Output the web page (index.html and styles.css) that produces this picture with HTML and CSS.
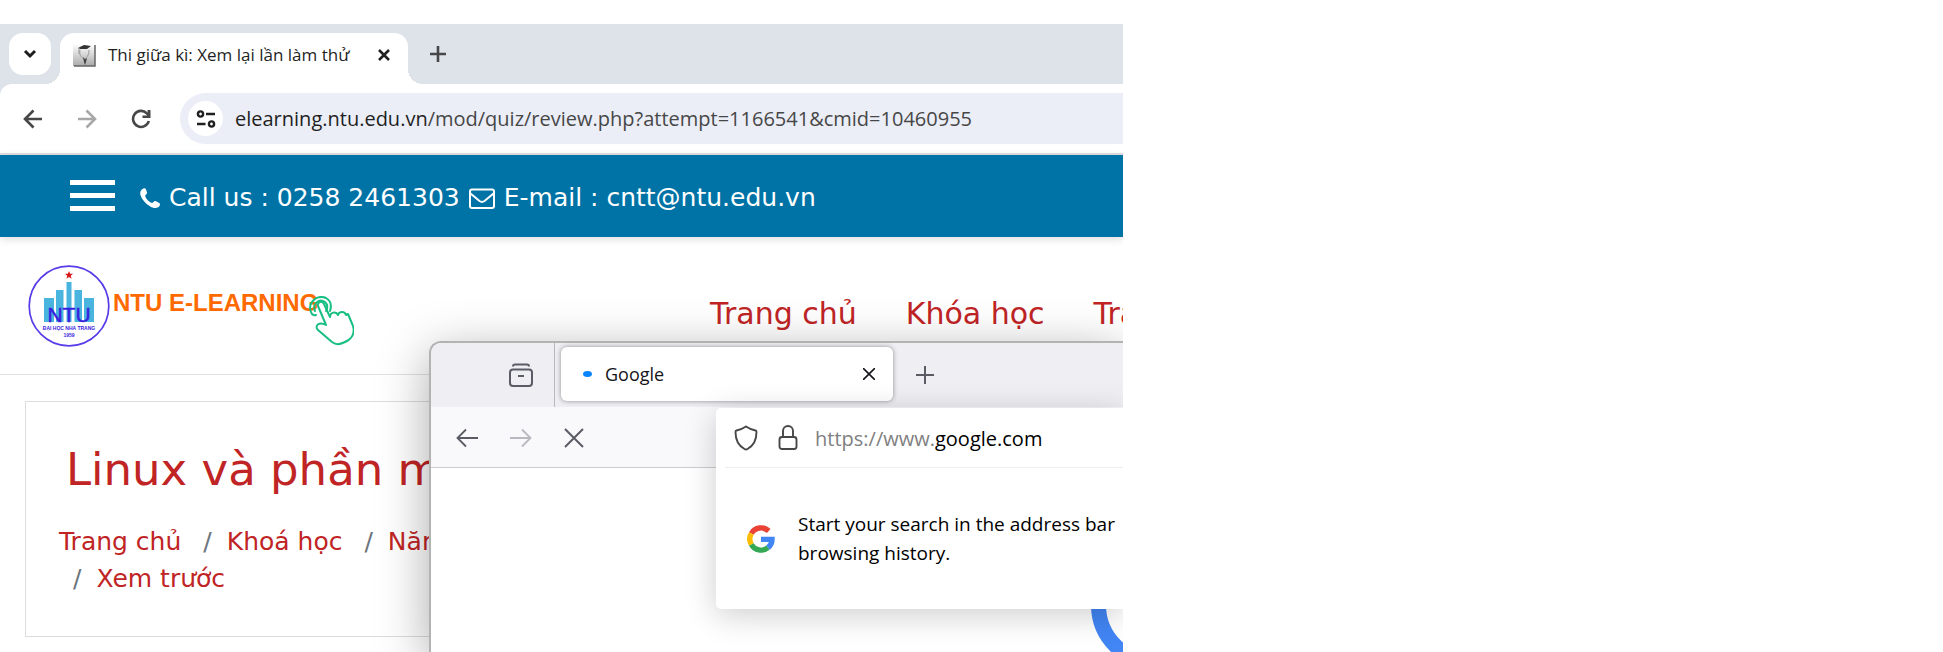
FILE: index.html
```html
<!DOCTYPE html>
<html lang="vi">
<head>
<meta charset="utf-8">
<title>Thi giữa kì: Xem lại lần làm thử</title>
<link rel="stylesheet" href="styles.css">
</head>
<body>
<div class="desktop">
  <div class="chrome">
    <div class="chrome-tabs">
      <button class="tab-search" aria-label="Search tabs"><svg width="14" height="10" viewBox="0 0 14 10"><path d="M2 2l5 5 5-5" fill="none" stroke="#1f1f1f" stroke-width="3"/></svg></button>
      <div class="chrome-tab">
        <svg class="favicon" width="24" height="24" viewBox="0 0 24 24"><defs><linearGradient id="fg" x2="0" y2="1"><stop offset="0" stop-color="#fff"/><stop offset="1" stop-color="#aaa"/></linearGradient></defs><path d="M1 1h22v22H1z" fill="url(#fg)"/><path d="M23 2v21H2" fill="none" stroke="#666" stroke-width="1.500"/><path d="M6 5l6-3 7 1-4 3-7 0z" fill="#333"/><path d="M7 5v6M8 7c-1 5 1 7 4 9M17 7c0 4-1 6-3 8" fill="none" stroke="#999"/><path d="M11 14l2 2 2-1-1 4-1 3-1-3z" fill="#444"/></svg>
        <span class="chrome-tab-title">Thi giữa kì: Xem lại lần làm thử</span>
        <button class="plain" aria-label="Close tab"><svg width="14" height="14" viewBox="0 0 14 14"><path d="M2 2l10 10M12 2L2 12" stroke="#1f1f1f" stroke-width="2.600"/></svg></button>
      </div>
      <button class="plain chrome-new" aria-label="New tab"><svg width="16" height="16" viewBox="0 0 16 16"><path d="M8 0v16M0 8h16" stroke="#474747" stroke-width="2.600"/></svg></button>
    </div>
    <div class="chrome-bar-wrap"><div class="chrome-bar">
      <button class="plain" aria-label="Back"><svg width="20" height="20" viewBox="0 0 20 20"><path d="M19 10H3M10.500 1.500L2 10l8.500 8.500" fill="none" stroke="#474747" stroke-width="2.600"/></svg></button>
      <button class="plain" aria-label="Forward"><svg width="20" height="20" viewBox="0 0 20 20"><path d="M1 10h16M9.500 1.500L18 10l-8.500 8.500" fill="none" stroke="#a8a8a8" stroke-width="2.600"/></svg></button>
      <button class="plain" aria-label="Reload"><svg width="20" height="20" viewBox="0 0 20 20"><path d="M17.800 12a8 8 0 1 1-2-7.700L18 6.500" fill="none" stroke="#474747" stroke-width="2.600"/><path d="M19.500 1v8h-8V6.500h5V1z" fill="#474747"/></svg></button>
      <div class="omnibox">
        <button class="site-info" aria-label="Site information"><svg width="20" height="18" viewBox="0 0 20 18" fill="none" stroke="#1f1f1f" stroke-width="2.400"><circle cx="4.500" cy="4" r="2.600"/><path d="M10 4h9M1 14h8.500"/><circle cx="15.500" cy="14" r="2.600"/></svg></button>
        <div class="url"><span>elearning.ntu.edu.vn</span>/mod/quiz/review.php?attempt=1166541&amp;cmid=10460955</div>
      </div>
    </div></div>
    <div class="topbar">
      <button class="plain burger" aria-label="Menu"><i></i><i></i><i></i></button>
      <svg width="20" height="20" viewBox="0 0 20 20"><path d="M3.500.5c1.500-.8 2.300 0 2.800 1.800l.8 2.500c.3 1.200-2 2-1.900 3 .3 2.700 4 6.600 6.800 7.200 1.300.2 1.800-2 3-1.900.9.200 4 1.700 4.800 2.300.5 1-.3 3-1.200 3.600-2.700 1.500-5.600 1-8.300-.6C5.500 15.600 2.200 11.900.6 7.500-.4 4.500.6 1.700 3.500.5z" fill="#fff"/></svg>
      <span>Call us : 0258 2461303</span>
      <svg width="26" height="21" viewBox="0 0 26 21" fill="none" stroke="#fff" stroke-width="2"><rect x="1" y="1.500" width="24" height="18.500" rx="2"/><path d="M1.500 5.500l9 7.500q2.500 1.800 5 0l9-7.500"/></svg>
      <span>E-mail : cntt@ntu.edu.vn</span>
    </div>
    <header class="site-head">
      <div class="brand">
        <svg class="seal" width="82" height="82" viewBox="0 0 82 82"><circle cx="41" cy="41" r="39.800" fill="#fff" stroke="#5a3be8" stroke-width="1.700"/><path d="M41 6l1.100 2.800h3l-2.400 1.900.9 3L41 12l-2.600 1.700.9-3-2.400-1.900h3z" fill="#d81818"/><path d="M16 33h10v24H16zM28 25h7.500v32H28zM38.500 17h5v40h-5zM46.500 25H54v32h-7.500zM56 33h10v24H56z" fill="#49b4de"/><text x="41" y="57" class="seal-ntu">NTU</text><text x="41" y="65" class="seal-small">ĐẠI HỌC NHA TRANG</text><text x="41" y="72" class="seal-year">1959</text></svg>
        <span class="brand-name">NTU E-LEARNING</span>
        <svg class="hand" width="46" height="50" viewBox="0 0 46 50" fill="none" stroke="#18bf83" stroke-width="2" stroke-linecap="round" stroke-linejoin="round"><path d="M18 29L10 10c-1-4 4-6 6-2l6 13c0-5 6-6 8-2 1-4 7-4 8 0l2-1 5 12c2 7-1 13-8 16-6 3-9 3-13 0L10 34c-4-4 1-9 8-5z"/><path d="M7 15C4 8 11 2 17 6q4 4 1 9"/><path d="M4 18C-2 8 8-2 18 2q7 4 4 13M4 18q2 2 4 1"/></svg>
      </div>
      <nav class="site-nav"><a href="#">Trang chủ</a><a href="#">Khóa học</a><a href="#">Trang</a></nav>
    </header>
    <main class="course">
      <h1>Linux và phần mềm</h1>
      <ol class="crumbs"><li><a href="#">Trang chủ</a></li><li><a href="#">Khoá học</a></li><li><a href="#">Năm</a></li></ol>
      <ol class="crumbs crumbs-last"><li><a href="#">Xem trước</a></li></ol>
    </main>
  </div>

  <section class="firefox" aria-label="Google">
    <div class="fx-tabs">
      <div class="fx-view"><button class="plain" aria-label="Recent browsing"><svg width="24" height="24" viewBox="0 0 24 24" fill="none" stroke="#5b5b66" stroke-width="2"><path d="M4 3.500C4 2 5 1.500 6 1.500h12c1 0 2 .5 2 2" /><rect x="1" y="6.500" width="22" height="16.500" rx="3"/><path d="M9 13h6"/></svg></button></div>
      <div class="fx-tab"><i class="fx-dot"></i><span>Google</span><button class="plain" aria-label="Close tab"><svg width="12" height="12" viewBox="0 0 12 12"><path d="M0 0l12 12M12 0L0 12" stroke="#15141a" stroke-width="1.600"/></svg></button></div>
      <button class="plain fx-new" aria-label="New tab"><svg width="18" height="18" viewBox="0 0 18 18"><path d="M9 0v18M0 9h18" stroke="#5b5b66" stroke-width="2"/></svg></button>
    </div>
    <div class="fx-bar">
      <button class="plain" aria-label="Back"><svg width="22" height="20" viewBox="0 0 22 20"><path d="M22 10H2M10 1.500L1.500 10l8.500 8.500" fill="none" stroke="#5b5b66" stroke-width="1.800"/></svg></button>
      <button class="plain" aria-label="Forward"><svg width="22" height="20" viewBox="0 0 22 20"><path d="M0 10h20M12 1.500l8.500 8.500-8.500 8.500" fill="none" stroke="#b9b9bf" stroke-width="1.800"/></svg></button>
      <button class="plain" aria-label="Stop"><svg width="20" height="20" viewBox="0 0 20 20"><path d="M1 1l18 18M19 1L1 19" stroke="#5b5b66" stroke-width="2"/></svg></button>
    </div>
    <div class="fx-page"><svg class="big-g" width="130" height="130" viewBox="0 0 130 130"><circle cx="65" cy="65" r="57.500" fill="none" stroke="#4285f4" stroke-width="15"/></svg></div>
    <div class="fx-panel">
      <div class="fx-url">
        <svg width="24" height="26" viewBox="0 0 24 26"><path d="M12 1.500c3 2 6.500 3.500 9.500 4 .8.200 1 .7 1 1.500 0 8-3.500 14-9 17-1 .6-2 .6-3 0-5.500-3-9-9-9-17 0-.8.200-1.300 1-1.500 3-.5 6.500-2 9.500-4z" fill="none" stroke="#474747" stroke-width="1.900"/></svg>
        <svg width="20" height="26" viewBox="0 0 20 26" fill="none" stroke="#474747" stroke-width="1.900"><rect x="1.500" y="12" width="17" height="12" rx="2.500"/><path d="M5 12V6a5 5 0 0 1 10 0v6"/></svg>
        <span class="fx-address">https://www.<b>google.com</b></span>
      </div>
      <div class="fx-tip">
        <svg width="28" height="28" viewBox="0 0 28 28" fill="none" stroke-width="5.400"><path d="M21.700 6A11.200 11.200 0 0 0 4.300 8.500" stroke="#ea4335"/><path d="M4.300 8.500a11.200 11.200 0 0 0 0 11" stroke="#fbbc05"/><path d="M4.300 19.500a11.200 11.200 0 0 0 16.700 3.200" stroke="#34a853"/><path d="M21 22.700a11 11 0 0 0 4-8.300H14" stroke="#4285f4"/></svg>
        <p>Start your search in the address bar<br>browsing history.</p>
      </div>
    </div>
  </section>
</div>
</body>
</html>
```
FILE: styles.css
```css
* { box-sizing: border-box; }
body { margin: 0; background: #fff; font-family: "Open Sans", "Noto Sans", sans-serif; }
h1, p, ol { margin: 0; padding: 0; }
svg { display: block; flex: none; }
.plain { border: 0; padding: 0; background: none; display: block; flex: none; }
.desktop { position: relative; margin-top: 24px; width: 57.8vw; height: calc(100vh - 24px); overflow: hidden; white-space: nowrap; }

.chrome-tabs { display: flex; align-items: center; height: 60px; padding-left: 9px; background: #dee3ea; }
.tab-search { width: 42px; height: 42px; border: 0; border-radius: 14px; background: #fff; padding: 0; display: grid; place-items: center; flex: none; }
.chrome-tab { position: relative; align-self: flex-end; display: flex; align-items: center; width: 348px; height: 51px; margin-left: 9px; padding: 0 17px 8px 12px; border-radius: 14px 14px 0 0; background: #fff; }
.chrome-tab::before, .chrome-tab::after { content: ""; position: absolute; bottom: 0; width: 15px; height: 15px; }
.chrome-tab::before { right: 100%; background: radial-gradient(circle at 0 0, transparent 15px, #fff 15px); }
.chrome-tab::after { left: 100%; background: radial-gradient(circle at 100% 0, transparent 15px, #fff 15px); }
.chrome-tab-title { flex: 1; margin-left: 12px; font-size: 17px; line-height: 24px; color: #1f1f1f; }
.chrome-new { margin-left: 22px; }
.chrome-bar-wrap { background: #dee3ea; }
.chrome-bar { display: flex; align-items: center; gap: 34px; height: 71px; padding-left: 23px; border-bottom: 2px solid #e0e0e0; border-radius: 12px 0 0 0; background: #fff; }
.omnibox { flex: 1; display: flex; align-items: center; height: 51px; margin-left: -5px; padding-left: 8px; border-radius: 26px 0 0 26px; background: #ebeef7; }
.site-info { width: 35px; height: 35px; border: 0; border-radius: 50%; padding: 0; background: #fff; display: grid; place-items: center; flex: none; }
.url { margin-left: 12px; font-size: 20px; line-height: 28px; color: #474747; }
.url span { color: #1f1f1f; }

.topbar { position: relative; display: flex; align-items: center; height: 82px; padding: 4px 0 0 70px; background: #0073a6; box-shadow: 0 2px 8px rgba(0,0,0,.14); color: #fff; font: 25px/36px Verdana, "DejaVu Sans", sans-serif; gap: 9px; }
.burger { display: grid; gap: 8px; width: 45px; margin-right: 16px; margin-bottom: 6px; }
.burger i { height: 5px; background: #fff; }
.site-head { display: flex; height: 138px; padding-left: 28px; border-bottom: 1px solid #e4e0e2; }
.brand { display: flex; width: 682px; padding-top: 28px; flex: none; }
.brand-name { margin: 20px 0 0 3px; font: bold 24px/36px "Liberation Sans", sans-serif; color: #ff6a00; }
.hand { margin: 31px 0 0 -10px; }
.seal text { font-family: "Liberation Sans", sans-serif; text-anchor: middle; fill: #3a1ee0; }
.seal .seal-ntu { font-size: 21px; stroke: #3a1ee0; stroke-width: .5px; }
.seal .seal-small { font-size: 5px; font-weight: bold; }
.seal .seal-year { font-size: 5px; font-weight: bold; }
.site-nav { display: flex; gap: 49px; padding-top: 56px; font: 30px/42px Verdana, "DejaVu Sans", sans-serif; }
a { color: #c02425; text-decoration: none; }
.course { height: 236px; margin: 26px 25px 0; padding: 38px 33px; border: 1px solid #dcdcdc; overflow: hidden; font-family: Verdana, "DejaVu Sans", sans-serif; }
.course h1 { padding-left: 7px; font-size: 45px; line-height: 60px; font-weight: 400; color: #c02425; }
.crumbs { display: flex; list-style: none; margin-top: 23px; font-size: 25px; line-height: 37px; }
.crumbs-last { margin-top: 0; }
.crumbs li + li::before, .crumbs-last li::before { content: "/"; padding: 0 15px 0 22px; color: #6c757d; }
.crumbs-last li::before { padding-left: 14px; }

.firefox { position: absolute; left: 429px; right: 0; top: 317px; bottom: 0; border: 2px solid #b3b3b3; border-width: 2px 0 0 2px; border-radius: 12px 0 0 0; background: #fff; box-shadow: 0 12px 50px rgba(0,0,0,.34); }
.fx-tabs { display: flex; align-items: center; height: 64px; background: #efeef3; border-radius: 10px 0 0 0; }
.fx-view { display: flex; align-items: center; justify-content: flex-end; width: 124px; height: 64px; padding-right: 21px; border-right: 1px solid #b8b8be; }
.fx-tab { display: flex; align-items: center; width: 332px; height: 54px; margin: 0 0 2px 6px; padding: 0 18px 0 22px; border-radius: 6px; background: #fff; box-shadow: 0 0 5px rgba(0,0,0,.4); font-size: 18px; color: #15141a; }
.fx-tab span { flex: 1; margin-left: 13px; }
.fx-dot { width: 9px; height: 6px; border-radius: 50%; background: #0a84ff; }
.fx-new { margin-left: 23px; }
.fx-bar { display: flex; align-items: center; gap: 32px; height: 61px; padding: 2px 0 0 25px; border-bottom: 1px solid #ccc; background: #f9f9fb; }
.fx-page { position: relative; }
.big-g { position: absolute; left: 660px; top: 72px; }
.fx-panel { position: absolute; left: 285px; right: 0; top: 65px; height: 201px; background: #fff; border-radius: 5px 0 0 5px; box-shadow: 0 6px 32px rgba(0,0,0,.2); }
.fx-url { display: flex; align-items: center; height: 60px; margin-left: 9px; padding-left: 9px; border-bottom: 1px solid #eee; }
.fx-url svg + svg { margin-left: 20px; }
.fx-address { margin-left: 17px; padding-top: 2px; font-size: 20px; color: #808080; }
.fx-address b { font-weight: 400; color: #000; }
.fx-tip { display: flex; align-items: center; height: 141px; padding: 0 0 0 31px; font-size: 19px; line-height: 29px; color: #000; }
.fx-tip p { margin-left: 23px; }
```
